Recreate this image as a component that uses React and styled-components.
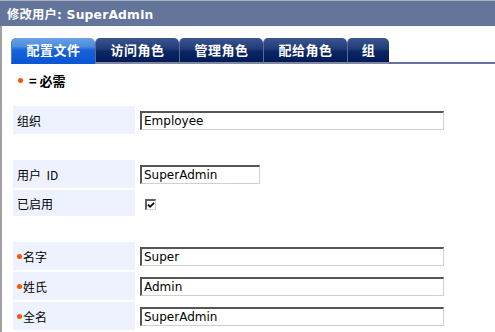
import React from "react";
import styled, { createGlobalStyle } from "styled-components";

const GlobalStyle = createGlobalStyle`
  html, body {
    margin: 0;
    padding: 0;
    background: #ffffff;
  }
  body {
    font-family: "DejaVu Sans", "Noto Sans CJK SC", sans-serif;
    font-size: 12px;
    color: #000;
  }
`;

const tabs = [
  { label: "配置文件", active: true },
  { label: "访问角色" },
  { label: "管理角色" },
  { label: "配给角色" },
  { label: "组", narrow: true },
];

export default function App() {
  return (
    <Page>
      <GlobalStyle />
      <Header>修改用户: SuperAdmin</Header>
      <Body>
        <TabStrip>
          {tabs.map((t) => (
            <Tab key={t.label} $active={t.active} $narrow={t.narrow}>
              {t.label}
            </Tab>
          ))}
          <TabFill />
        </TabStrip>
        <Required>
          <Dot />= 必需
        </Required>

        <Group>
          <Row>
            <Label>组织</Label>
            <Field>
              <Input defaultValue="Employee" $wide readOnly />
            </Field>
          </Row>
        </Group>

        <Group>
          <Row>
            <Label>用户&nbsp;&nbsp;ID</Label>
            <Field>
              <Input defaultValue="SuperAdmin" readOnly />
            </Field>
          </Row>
          <Row $short>
            <Label>已启用</Label>
            <Field>
              <Check>
                <svg width="9" height="8" viewBox="0 0 9 8">
                  <path d="M1 3.5 L3.5 6 L8 1.5" stroke="#000" strokeWidth="2" fill="none" />
                </svg>
              </Check>
            </Field>
          </Row>
        </Group>

        <Group>
          <Row>
            <Label>
              <Dot $small />名字
            </Label>
            <Field>
              <Input defaultValue="Super" $wide readOnly />
            </Field>
          </Row>
          <Row>
            <Label>
              <Dot $small />姓氏
            </Label>
            <Field>
              <Input defaultValue="Admin" $wide readOnly />
            </Field>
          </Row>
          <Row>
            <Label>
              <Dot $small />全名
            </Label>
            <Field>
              <Input defaultValue="SuperAdmin" $wide readOnly />
            </Field>
          </Row>
        </Group>
      </Body>
    </Page>
  );
}

const Page = styled.div`
  width: 495px;
  height: 332px;
  overflow: hidden;
  display: flex;
  flex-direction: column;
`;

const Header = styled.div`
  height: 25px;
  border-top: 1px solid #aab0c0;
  background: #63759a;
  color: #ffffff;
  font-weight: bold;
  font-size: 12.3px;
  letter-spacing: 0.2px;
  display: flex;
  align-items: center;
  padding-left: 7px;
  font-family: "DejaVu Sans", "Noto Sans CJK SC", sans-serif;
`;

const Body = styled.div`
  flex: 1;
  border-left: 2px solid #a0a0a0;
  padding: 12px 0 0 9px;
  display: flex;
  flex-direction: column;
`;

const TabStrip = styled.div`
  display: flex;
  height: 26px;
  align-items: stretch;
`;

const Tab = styled.div`
  width: ${(p) => (p.$narrow ? "42px" : "84px")};
  box-sizing: border-box;
  border-radius: 5px 5px 0 0;
  border-left: 1px solid ${(p) => (p.$active ? "#4a80d0" : "#5a6a92")};
  border-bottom: 2px solid ${(p) => (p.$active ? "#0a58d8" : "#8088a0")};
  background: ${(p) =>
    p.$active
      ? "linear-gradient(#6aa0e4 0%, #4c8ce0 35%, #1a62d8 50%, #0a56d4 100%)"
      : "linear-gradient(#3c5590 0%, #203c78 45%, #0c2766 55%, #001a58 100%)"};
  color: #ffffff;
  font-family: "Noto Sans CJK SC", sans-serif;
  font-weight: bold;
  font-size: 13px;
  letter-spacing: 0.5px;
  display: flex;
  align-items: center;
  justify-content: center;
  padding-bottom: 1px;
`;

const TabFill = styled.div`
  flex: 1;
  border-bottom: 2px solid #6070a8;
`;

const Required = styled.div`
  margin: 9px 0 0 7px;
  height: 14px;
  display: flex;
  align-items: center;
  font-family: "Noto Sans CJK SC", sans-serif;
  font-weight: bold;
  font-size: 13px;
  gap: 6px;
`;

const Dot = styled.span`
  display: inline-block;
  width: 5px;
  height: 5px;
  border-radius: 50%;
  background: #ff5500;
  margin-right: ${(p) => (p.$small ? "1px" : "0")};
`;

const Group = styled.div`
  display: flex;
  flex-direction: column;
  gap: 2px;
  margin-top: 19px;
  & + & {
    margin-top: 26px;
  }
`;

const Row = styled.div`
  display: flex;
  gap: 2px;
  height: ${(p) => (p.$short ? "26px" : "28px")};
  padding-left: 2px;
`;

const Label = styled.div`
  width: 122px;
  background: #eef2fe;
  display: flex;
  align-items: center;
  padding-left: 4px;
  box-sizing: border-box;
  font-family: "Noto Sans CJK SC", sans-serif;
  font-size: 12px;
`;

const Field = styled.div`
  display: flex;
  align-items: center;
  padding-left: 3px;
`;

const Input = styled.input`
  box-sizing: border-box;
  width: ${(p) => (p.$wide ? "304px" : "120px")};
  height: 19px;
  margin: 0;
  padding: 0 0 0 2px;
  border-style: solid;
  border-width: 2px 1px 1px 2px;
  border-color: #555555 #d4d0c8 #d4d0c8 #555555;
  font-family: "DejaVu Sans", sans-serif;
  font-size: 12px;
  color: #000;
  background: #ffffff;
  outline: none;
`;

const Check = styled.div`
  margin-left: 5px;
  margin-top: 2px;
  width: 11px;
  height: 11px;
  box-sizing: border-box;
  border-style: solid;
  border-width: 2px 1px 1px 2px;
  border-color: #606060 #d4d0c8 #d4d0c8 #606060;
  display: flex;
  align-items: center;
  justify-content: center;
  background: #fff;
`;
